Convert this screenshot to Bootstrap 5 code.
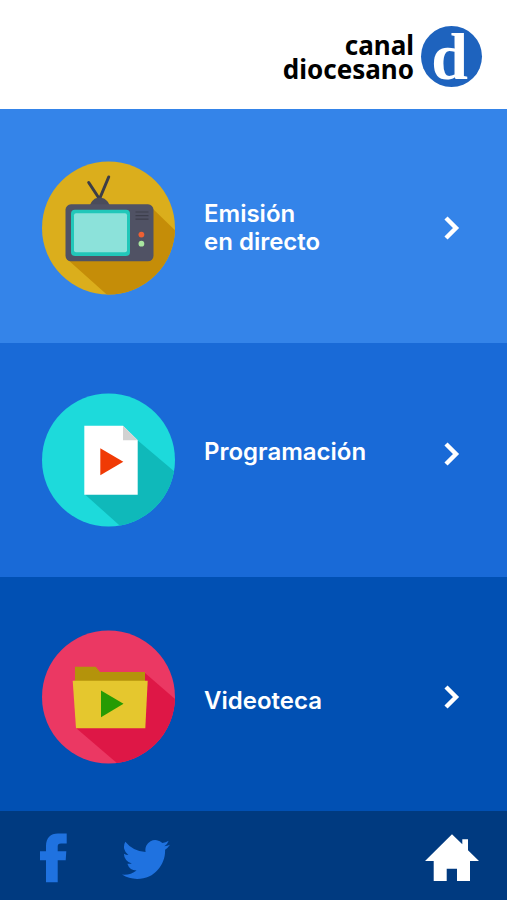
<!DOCTYPE html>
<html lang="es">
<head>
<meta charset="utf-8">
<meta name="viewport" content="width=device-width, initial-scale=1">
<title>Canal diocesano</title>
<link href="https://cdn.jsdelivr.net/npm/bootstrap@5.3.0/dist/css/bootstrap.min.css" rel="stylesheet">
<style>
  body { font-family: Inter, "Liberation Sans", sans-serif; background: #003a80; }
  .brand-bar { min-height: 109px; padding: 26px 25px 22px; background: #fff; }
  .brand-link { gap: 7px; }
  .brand-name { font: 700 26px/24px "Noto Sans", sans-serif; color: #000; text-align: right; }
  .brand-disc { width: 61px; height: 61px; background: #1e63be; font: 700 66px/61px "Liberation Serif", serif; color: #fff; padding-right: 4px; }
  .tile { min-height: 234px; padding: 0 47px 0 42px; color: #fff; text-decoration: none; }
  .tile:hover { color: #fff; }
  .tile-live { background: #3484e9; padding-top: 4px; }
  .tile-guide { background: #196ad7; }
  .tile-library { background: #0150b3; padding-top: 6px; }
  .tile-art { width: 134px; height: 134px; margin-right: 28px; }
  .tile-label { font-size: 24px; line-height: 28px; font-weight: 600; }
  .tile-guide .tile-arrow { margin-bottom: 12px; }
  .foot-bar { min-height: 89px; padding: 4px 28px 0 40px; background: #003a80; }
  .social { gap: 54px; }
  .social a { color: #1f72e0; }
</style>
</head>
<body>
<div class="d-flex flex-column min-vh-100">
  <header class="brand-bar d-flex justify-content-end align-items-center">
    <a href="#" class="brand-link d-flex align-items-center text-decoration-none">
      <span class="brand-name">canal<br>diocesano</span>
      <span class="brand-disc rounded-circle text-center">d</span>
    </a>
  </header>

  <main class="flex-grow-1 d-flex flex-column">
    <a href="#" class="tile tile-live d-flex align-items-center flex-grow-1">
      <svg class="tile-art flex-shrink-0" viewBox="0 0 134 134" aria-hidden="true">
        <clipPath id="disc"><circle cx="66.5" cy="67" r="66.5"/></clipPath>
        <circle cx="66.5" cy="67" r="66.5" fill="#dbae1c"/>
        <path clip-path="url(#disc)" fill="#c58d08" d="M109 46 140 76V140H72L25 98z"/>
        <path d="M46.7 21.5 57.5 38M66.7 16 57.5 38" stroke="#3c3d47" stroke-width="3" stroke-linecap="round" fill="none"/>
        <path fill="#4a4c5b" d="M47.5 45c2-5 5-8.500 10-8.500S66 40 68 45z"/>
        <rect x="23.500" y="43.300" width="88" height="57" rx="5.500" fill="#505264"/>
        <rect x="29" y="48.700" width="59" height="46.300" rx="4" fill="#22c7b9"/>
        <rect x="32" y="52.300" width="53" height="39" rx="2" fill="#8ce2da"/>
        <path d="M93.500 51h13M93.500 54.600h13M93.500 58.200h13" stroke="#3c3e4b" stroke-width="1.200"/>
        <circle cx="99.400" cy="73.600" r="2.900" fill="#ee6033"/>
        <circle cx="99.400" cy="82.700" r="2.900" fill="#a9e6a0"/>
      </svg>
      <span class="tile-label flex-grow-1">Emisión<br>en directo</span>
      <svg class="tile-arrow" width="17" height="26" viewBox="0 0 17 26" fill="none" stroke="#fff" stroke-width="4.4" aria-hidden="true"><path d="M3 3 13 13 3 23"/></svg>
    </a>

    <a href="#" class="tile tile-guide d-flex align-items-center flex-grow-1">
      <svg class="tile-art flex-shrink-0" viewBox="0 0 134 134" aria-hidden="true">
        <circle cx="66.5" cy="67" r="66.5" fill="#1ddadb"/>
        <path clip-path="url(#disc)" fill="#0fb9ba" d="M95.500 47.300 140 85V140H86L43 101.500z"/>
        <path fill="#fff" d="M42.300 32.700H81L95.700 47.300V101.700H42.300z"/>
        <path fill="#d2d2d2" d="M81 32.700 95.700 47.300H81z"/>
        <path fill="#f03a05" d="M58.300 55.300 81.300 68.700 58.300 82.300z"/>
      </svg>
      <span class="tile-label flex-grow-1 pb-3">Programación</span>
      <svg class="tile-arrow" width="17" height="26" viewBox="0 0 17 26" fill="none" stroke="#fff" stroke-width="4.4" aria-hidden="true"><path d="M3 3 13 13 3 23"/></svg>
    </a>

    <a href="#" class="tile tile-library d-flex align-items-center flex-grow-1">
      <svg class="tile-art flex-shrink-0" viewBox="0 0 134 134" aria-hidden="true">
        <circle cx="66.5" cy="67" r="66.5" fill="#eb3863"/>
        <path clip-path="url(#disc)" fill="#de1746" d="M103 43 140 75V140H83L34 98z"/>
        <path fill="#b4930b" d="M33 36.700H53.700L58 42H103V52H33z"/>
        <path fill="#e5c72e" d="M30.700 50.700H105.700L103.300 98.300H34z"/>
        <path fill="#269b03" d="M59 60.500 81.500 73.700 59 87.200z"/>
      </svg>
      <span class="tile-label flex-grow-1 pt-2">Videoteca</span>
      <svg class="tile-arrow" width="17" height="26" viewBox="0 0 17 26" fill="none" stroke="#fff" stroke-width="4.4" aria-hidden="true"><path d="M3 3 13 13 3 23"/></svg>
    </a>
  </main>

  <footer class="foot-bar d-flex justify-content-between align-items-center">
    <div class="social d-flex align-items-center">
      <a href="#" class="d-flex" aria-label="Facebook">
        <svg width="28" height="50" viewBox="0 0 28 50" fill="currentColor"><path d="M26.700.5V10.500H21C18.500 10.500 17.700 11.500 17.700 13.500V18.300H26.300L25.700 27.300H17.700V49.300H6V27.300H0V18.300H6V13C6 5 10.500.5 18 .5z"/></svg>
      </a>
      <a href="#" class="d-flex" aria-label="Twitter">
        <svg width="48" height="48" viewBox="0 0 16 16" fill="currentColor"><path d="M5.026 15c6.038 0 9.341-5.003 9.341-9.334 0-.14 0-.282-.006-.422A6.685 6.685 0 0 0 16 3.542a6.658 6.658 0 0 1-1.889.518 3.301 3.301 0 0 0 1.447-1.817 6.533 6.533 0 0 1-2.087.793A3.286 3.286 0 0 0 7.875 6.030a9.325 9.325 0 0 1-6.767-3.429 3.289 3.289 0 0 0 1.018 4.382A3.323 3.323 0 0 1 .640 6.575v.045a3.288 3.288 0 0 0 2.632 3.218 3.203 3.203 0 0 1-.865.115 3.230 3.230 0 0 1-.614-.057 3.283 3.283 0 0 0 3.067 2.277A6.588 6.588 0 0 1 .780 13.580a6.320 6.320 0 0 1-.780-.045A9.344 9.344 0 0 0 5.026 15z"/></svg>
      </a>
    </div>
    <a href="#" class="d-flex text-white" aria-label="Inicio">
      <svg width="54" height="48" viewBox="0 0 54 48" fill="currentColor"><path d="M27 .3 37.300 10.300V5.300H43V16.300L54 27H45V47H32V34.700H21.700V47H8.700V27H0z"/></svg>
    </a>
  </footer>
</div>
<script src="https://cdn.jsdelivr.net/npm/bootstrap@5.3.0/dist/js/bootstrap.bundle.min.js"></script>
</body>
</html>
